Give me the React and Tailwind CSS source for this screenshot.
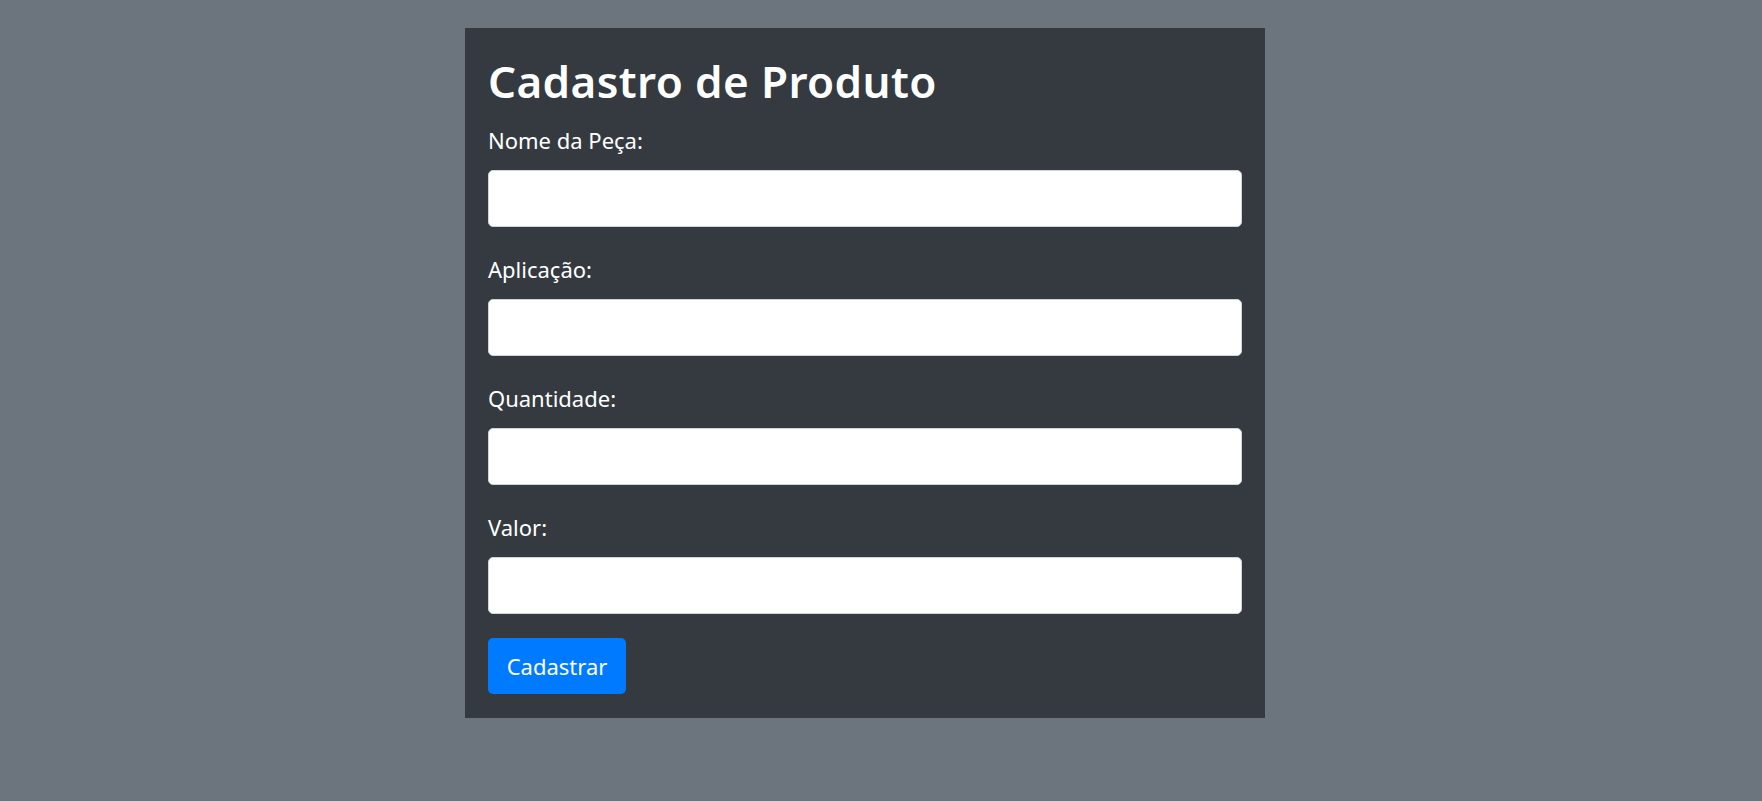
export default function App() {
  const fields = ["Nome da Peça:", "Aplicação:", "Quantidade:", "Valor:"];
  return (
    <div className="min-h-screen w-full bg-[#6c757d] pt-[28px] pb-[1px]" style={{ fontFamily: '"Noto Sans", "Open Sans", sans-serif' }}>
      <div className="ml-[465px] w-[800px] bg-[#343a40] px-[23px] pt-[27px] pb-[24px]">
        <h1 className="text-[44px] leading-[53px] font-semibold tracking-[0.4px] text-white mb-[16px]">Cadastro de Produto</h1>
        {fields.map((f) => (
          <div key={f} className="mb-[26px] flex flex-col">
            <label className="text-[22px] leading-[33px] text-white">{f}</label>
            <input type="text" className="mt-[13px] h-[57px] w-full rounded-[5px] border border-[#ced4da] bg-white px-4 text-[22px] outline-none" />
          </div>
        ))}
        <div className="-mt-[2px]">
          <button className="flex h-[56px] w-[138px] items-center justify-center rounded-[5px] bg-[#007bff] text-[22px] text-white">
            Cadastrar
          </button>
        </div>
      </div>
    </div>
  );
}
